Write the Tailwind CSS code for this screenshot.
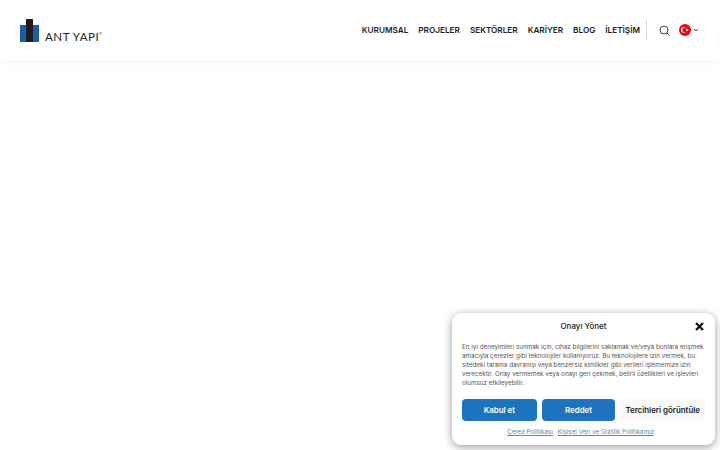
<!DOCTYPE html>
<html lang="tr">
<head>
  <meta charset="UTF-8" />
  <meta name="viewport" content="width=device-width, initial-scale=1.0" />
  <title>Ant Yapı</title>
  <script src="https://cdn.jsdelivr.net/npm/@tailwindcss/browser@4"></script>
</head>
<body class="relative h-[450px] w-[720px] overflow-hidden bg-white font-['Inter',sans-serif]">
  <header class="flex h-[60px] items-center justify-between pl-5 pr-[21px] shadow-[0_2px_10px_rgba(0,0,0,0.04)]">
    <a href="#" class="flex items-end">
      <svg width="19" height="23" viewBox="0 0 19 23">
        <rect x="0" y="6" width="6" height="17" fill="#1c5fa8" />
        <rect x="6" y="0" width="7" height="23" fill="#1d1d1f" />
        <rect x="13" y="6" width="6" height="17" fill="#1c5fa8" />
      </svg>
      <span class="ml-[6px] text-[11.5px] leading-[10px] tracking-[0.55px] text-[#222] font-['Lato',sans-serif]">ANT YAPI</span>
      <span class="mb-[6px] text-[4px] leading-none text-[#444]">®</span>
    </a>
    <div class="flex items-center">
      <nav class="flex gap-[10px] text-[8.2px] font-semibold text-[#1d1d1f]">
        <a href="#">KURUMSAL</a>
        <a href="#">PROJELER</a>
        <a href="#">SEKTÖRLER</a>
        <a href="#">KARİYER</a>
        <a href="#">BLOG</a>
        <a href="#">İLETİŞİM</a>
      </nav>
      <div class="ml-[6px] h-5 w-px bg-gray-300"></div>
      <svg class="ml-[12px]" width="11" height="11" viewBox="0 0 11 11" fill="none" stroke="#444" stroke-width="1">
        <circle cx="5" cy="5" r="4" />
        <path d="M8 8l2.5 2.5" />
      </svg>
      <svg class="ml-[9px]" width="12" height="12" viewBox="0 0 12 12">
        <circle cx="6" cy="6" r="6" fill="#e30a17" />
        <circle cx="4.8" cy="6" r="2.8" fill="#fff" />
        <circle cx="5.5" cy="6" r="2.2" fill="#e30a17" />
        <circle cx="8.2" cy="6" r="1" fill="#fff" />
      </svg>
      <svg class="ml-[2px]" width="6" height="6" viewBox="0 0 6 6" fill="none" stroke="#444" stroke-width="1">
        <path d="M1 2l2 2 2-2" />
      </svg>
    </div>
  </header>

  <div class="absolute left-[452px] top-[313px] flex h-[132px] w-[263px] flex-col rounded-[9px] bg-white px-[10px] shadow-[0_2px_8px_rgba(0,0,0,0.4)]">
    <div class="relative mt-[7px] text-center text-[8px] leading-[12px] font-medium text-[#222]">
      Onayı Yönet
      <svg class="absolute right-[1px] top-[2px]" width="9" height="9" viewBox="0 0 9 9" stroke="#111" stroke-width="2.2">
        <path d="M1 1l7 7M8 1l-7 7" />
      </svg>
    </div>
    <p class="mt-[11px] whitespace-nowrap text-[6.3px] leading-[9px] text-[#555]">En iyi deneyimleri sunmak için, cihaz bilgilerini saklamak ve/veya bunlara erişmek<br />amacıyla çerezler gibi teknolojiler kullanıyoruz. Bu teknolojilere izin vermek, bu<br />sitedeki tarama davranışı veya benzersiz kimlikler gibi verileri işlememize izin<br />verecektir. Onay vermemek veya onayı geri çekmek, belirli özellikleri ve işlevleri<br />olumsuz etkileyebilir.</p>
    <div class="mt-[11px] flex gap-[5px] text-[7.9px] font-semibold">
      <button class="h-[22px] w-[75px] rounded bg-[#1e73be] pt-px text-white">Kabul et</button>
      <button class="h-[22px] w-[74px] rounded bg-[#1e73be] pt-px text-white">Reddet</button>
      <button class="h-[22px] w-[85px] rounded bg-[#f9f9f9] pt-px text-[#222]">Tercihleri görüntüle</button>
    </div>
    <div class="mt-[7px] flex justify-center gap-[5px] pr-[6px] text-[6.3px] leading-[9px] text-[#5a87ad] underline">
      <a href="#">Çerez Politikası</a>
      <a href="#">Kişisel Veri ve Gizlilik Politikamız</a>
    </div>
  </div>
</body>
</html>
